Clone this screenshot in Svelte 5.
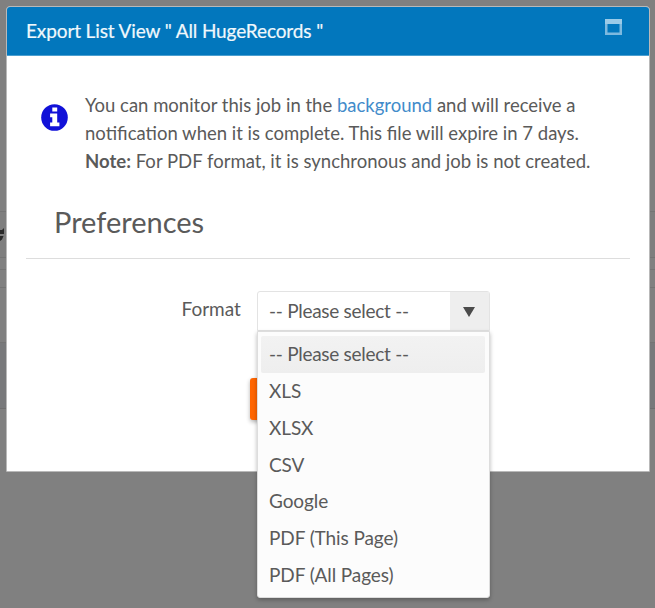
<script>
  let selected = $state('-- Please select --');
  let open = $state(true);
  const options = ['-- Please select --', 'XLS', 'XLSX', 'CSV', 'Google', 'PDF (This Page)', 'PDF (All Pages)'];

  function choose(option) {
    selected = option;
    open = false;
  }
</script>

<div class="page">
  <svg class="behind" width="5" height="18" viewBox="0 0 5 18" aria-hidden="true">
    <path d="M0 5 L2 5 L4 3 V9 H0 Z M0 11 H3.5 L2 14.5 L0 16 Z" fill="#292929" />
  </svg>
  <section class="dialog" role="dialog" aria-label="Export List View">
    <header>
      <h1>Export List View " All HugeRecords "</h1>
      <svg class="maximize" width="17" height="16" viewBox="0 0 17 16" aria-hidden="true">
        <path d="M0 0H17V16H0Z M2.5 5V13.5H14.5V5Z" fill="#7db9df" fill-rule="evenodd" />
        <path d="M0 0H17V5H0Z" fill="#9bcbe8" />
      </svg>
    </header>

    <div class="notice">
      <svg class="info" width="27" height="27" viewBox="0 0 27 27" aria-hidden="true">
        <circle cx="13.5" cy="13.5" r="13.3" fill="#1111d8" />
        <path d="M11.3 3.4h4.9v4.1h-4.9z M9.1 9.6h7.1v9h2.2v3.7H9.1v-3.7h2.2v-5.4H9.1z" fill="#fff" />
      </svg>
      <div class="message">
        <div class="l1">You can monitor this job in the <a href="#background">background</a> and will receive a</div>
        <div class="l2">notification when it is complete. This file will expire in 7 days.</div>
        <div class="l3"><b>Note:</b> For PDF format, it is synchronous and job is not created.</div>
      </div>
    </div>

    <h2>Preferences</h2>

    <div class="field">
      <span class="label">Format</span>
      <div class="select">
        <button class="value" class:placeholder={selected === options[0]} onclick={() => (open = !open)}>
          <span>{selected}</span>
          <i><svg width="12" height="10" viewBox="0 0 12 10"><path d="M0 0H12L6 10Z" fill="#4b4b4b" /></svg></i>
        </button>
        {#if open}
          <ul>
            {#each options as option, index}
              <li class:active={option === selected}>
                <button class:placeholder={index === 0} onclick={() => choose(option)}>{option}</button>
              </li>
            {/each}
          </ul>
        {/if}
      </div>
    </div>

    <div class="actions"><div class="submit"></div></div>
  </section>
</div>

<style>
  :global(body) { margin: 0; }
  .page {
    position: relative;
    box-sizing: border-box;
    width: 655px;
    height: 608px;
    padding: 6px 6px 0 6px;
    overflow: hidden;
    font-family: Lato, sans-serif;
    font-size: 19px;
    color: #5a5a5a;
    background: linear-gradient(#808080 211px, #747474 211px 212px, #7e7e7e 212px 257px, #747474 257px 258px, #808080 258px 269px, #747474 269px 270px, #808080 270px 287px, #747474 287px 288px, #808080 288px 342px, #747474 342px 343px, #78797b 343px 408px, #6f6f6f 408px 409px, #808080 409px);
  }
  .behind { position: absolute; left: 0; top: 225px; }
  .dialog {
    position: relative;
    box-sizing: border-box;
    width: 644px;
    height: 466px;
    background: #fff;
    border: 1px solid #b9b9b9;
    border-radius: 4px 4px 1px 1px;
  }
  header {
    display: flex;
    justify-content: space-between;
    box-sizing: border-box;
    height: 49px;
    padding: 12px 27px 0 19px;
    background: #0277bd;
    border-bottom: 1px solid #4b9fd0;
    border-radius: 3px 3px 0 0;
    color: #f0f8fc;
  }
  h1 { margin: 0; font-size: 19px; line-height: 24px; font-weight: 400; letter-spacing: -.12px; white-space: pre; -webkit-text-stroke: .2px #f0f8fc; }
  .notice { display: flex; gap: 17px; padding: 34px 0 0 34px; }
  .info { margin-top: 14px; }
  .message { padding-top: 1px; font-size: 18.5px; line-height: 28.2px; white-space: nowrap; }
  .l3 { font-size: 18.55px; }
  a { color: #428bca; text-decoration: none; }
  h2 {
    box-sizing: border-box;
    height: 77px;
    margin: 6px 19px 0;
    padding: 21px 0 0 28px;
    border-bottom: 1px solid #ddd;
    font-size: 29px;
    line-height: 38px;
    font-weight: 400;
  }
  .field { display: flex; padding: 32px 0 0 175px; }
  .label { width: 75px; margin-left: -.5px; margin-right: .5px; line-height: 35px; }
  .select { position: relative; width: 233px; }
  button { border: 0; background: none; padding: 0; font: inherit; color: inherit; text-align: left; letter-spacing: -.1px; }
  .placeholder { letter-spacing: -.28px; }
  .value {
    display: flex;
    justify-content: space-between;
    box-sizing: border-box;
    width: 233px;
    height: 40px;
    padding-left: 11px;
    line-height: 38px;
    background: #fff;
    border: 1px solid #e3e3e3;
    border-radius: 3px 3px 0 0;
  }
  i { display: flex; align-items: center; justify-content: center; width: 39px; padding: 3px 1px 0 0; box-sizing: border-box; background: #eee; }
  ul {
    position: absolute;
    left: 0;
    top: 40px;
    z-index: 2;
    box-sizing: border-box;
    width: 233px;
    height: 267px;
    margin: 0;
    padding: 4px 3px 0;
    list-style: none;
    background: #fcfcfc;
    border: 1px solid #ddd;
    border-radius: 0 0 3px 3px;
    box-shadow: 0 2px 4px rgba(0, 0, 0, .28);
  }
  li { height: 36.85px; }
  li button { display: block; box-sizing: border-box; width: 224px; height: 37px; padding-left: 8px; line-height: 36px; }
  .active button { background: linear-gradient(#f2f2f2, #eee); border-radius: 2px; }
  .actions { display: flex; padding: 47px 0 0 243px; }
  .submit { width: 100px; height: 42px; border-radius: 3px; background: #ff6500; box-shadow: 0 2px 4px rgba(0, 0, 0, .3); }
</style>
